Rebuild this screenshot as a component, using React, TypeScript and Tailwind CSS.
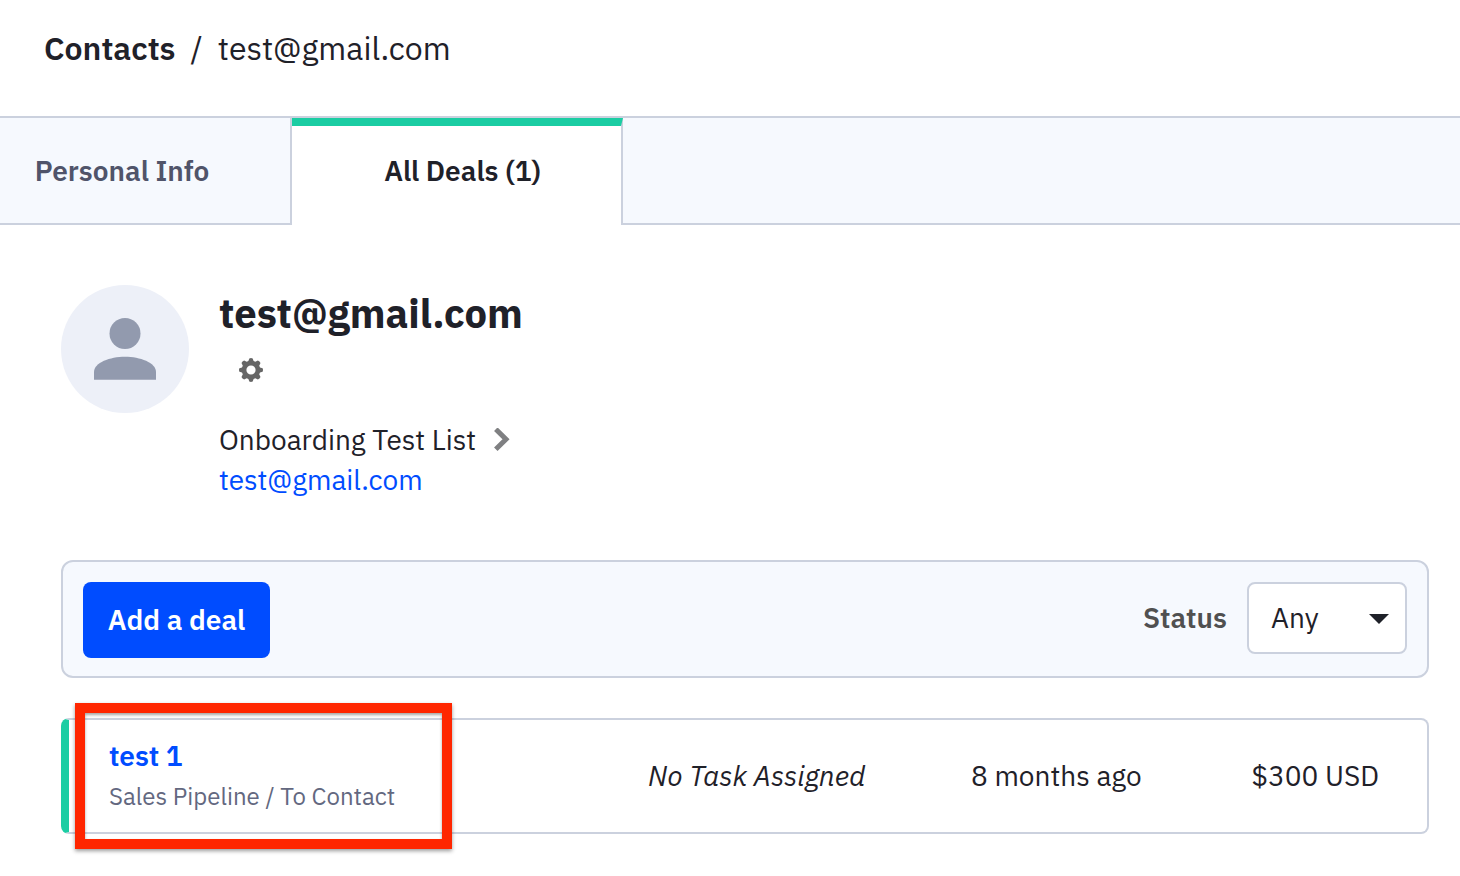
import { useState } from 'react';

const TABS = ['Personal Info', 'All Deals (1)'];

const DEALS = [
  {
    name: 'test 1',
    stage: 'Sales Pipeline / To Contact',
    task: 'No Task Assigned',
    age: '8 months ago',
    value: '$300 USD',
    highlighted: true,
  },
];

export default function App() {
  const [activeTab, setActiveTab] = useState(TABS[1]);

  return (
    <div className="min-h-screen bg-white text-[#1f2129] font-['IBM_Plex_Sans',Roboto,sans-serif] text-[28px] leading-10">
      <header className="px-11 pt-7 pb-12">
        <nav aria-label="Breadcrumb" className="flex gap-[15px] text-[32px]">
          <a href="#contacts" className="font-semibold">Contacts</a>
          <span>/</span>
          <span>test@gmail.com</span>
        </nav>
      </header>

      {/* Tabs */}
      <div role="tablist" className="flex border-t-2 border-[#cbd1de]">
        {TABS.map(tab => (
          <Tab key={tab} label={tab} active={tab === activeTab} onClick={() => setActiveTab(tab)} />
        ))}
        <div className="flex-1 bg-[#f6f9fe] border-b-2 border-[#cbd1de]" />
      </div>

      <main className="pl-[61px] pr-[31px] pt-[60px] pb-10">
        <Profile />
        <DealToolbar />
        <ul className="mt-10 space-y-5">
          {DEALS.map(deal => (
            <DealRow key={deal.name} deal={deal} />
          ))}
        </ul>
      </main>
    </div>
  );
}

function Tab({ label, active, onClick }: { label: string; active: boolean; onClick: () => void }) {
  return (
    <button
      type="button"
      role="tab"
      aria-selected={active}
      onClick={onClick}
      className={`h-[107px] border-r-2 border-r-[#cbd1de] font-semibold ${
        active
          ? 'w-[331px] pl-3 pb-2.5 bg-white border-t-8 border-t-[#1bcda3]'
          : 'w-[292px] pr-[46px] bg-[#f6f9fe] border-b-2 border-b-[#cbd1de] text-[#50546a]'
      }`}
    >
      {label}
    </button>
  );
}

function Profile() {
  return (
    <section className="flex items-start gap-[30px]">
      <svg className="w-32 h-32 shrink-0" viewBox="0 0 128 128">
        <circle cx="64" cy="64" r="64" fill="#edf0f8" />
        <g fill="#929aae">
          <circle cx="64" cy="48.5" r="15.5" />
          <path d="M33 94.7V87C33 77.5 49 71.7 64 71.7S95 77.5 95 87V94.7Z" />
        </g>
      </svg>
      <div>
        <h1 className="pt-1 text-[40px] leading-12 font-bold">test@gmail.com</h1>
        <button type="button" aria-label="Contact settings" className="block mt-[21px] ml-5">
          <GearIcon />
        </button>
        <div className="mt-[38px] flex items-center gap-[18px]">
          <span>Onboarding Test List</span>
          <svg className="w-4 h-6" viewBox="0 0 16 24" fill="none" stroke="#7f8082" strokeWidth="5">
            <path d="M1.8 1.2L12 11.2L1.8 21.2" />
          </svg>
        </div>
        <a href="mailto:test@gmail.com" className="block text-[#004cff]">test@gmail.com</a>
      </div>
    </section>
  );
}

function GearIcon() {
  return (
    <svg className="w-6 h-6" viewBox="0 0 24 24" fill="#666">
      <path
        fillRule="evenodd"
        d="M10.3 0.4Q12 -0.4 13.7 0.4L14.6 3L16.3 3.8L18.9 2.5Q20.8 3.2 21.5 5.1L20.2 7.7L21 9.4L23.6 10.3Q24.4 12 23.6 13.7L21 14.6L20.2 16.3L21.5 18.9Q20.8 20.8 18.9 21.5L16.3 20.2L14.6 21L13.7 23.6Q12 24.4 10.3 23.6L9.4 21L7.7 20.2L5.1 21.5Q3.2 20.8 2.5 18.9L3.8 16.3L3 14.6L0.4 13.7Q-0.4 12 0.4 10.3L3 9.4L3.8 7.7L2.5 5.1Q3.2 3.2 5.1 2.5L7.7 3.8L9.4 3ZM12 7.4A4.6 4.6 0 1 0 12 16.6A4.6 4.6 0 1 0 12 7.4Z"
      />
    </svg>
  );
}

function DealToolbar() {
  const [status, setStatus] = useState('Any');

  return (
    <section className="mt-[60px] flex items-start justify-between rounded-xl border-2 border-[#cbd1de] bg-[#f6f9fe] px-5 pt-5 pb-[18px]">
      <button type="button" className="h-[76px] w-[187px] rounded-lg bg-[#004cff] text-white font-semibold">
        Add a deal
      </button>
      <div className="flex items-center gap-5">
        <label htmlFor="status" className="font-semibold text-[#505050]">Status</label>
        <div className="relative">
          <select
            id="status"
            value={status}
            onChange={e => setStatus(e.target.value)}
            className="block h-[72px] w-40 appearance-none rounded-lg border-2 border-[#cbd1de] bg-white pl-[22px]"
          >
            <option>Any</option>
            <option>Open</option>
            <option>Won</option>
            <option>Lost</option>
          </select>
          <svg className="pointer-events-none absolute right-[18px] top-8 w-5 h-2.5" viewBox="0 0 20 10">
            <path d="M0 0H20L10 10Z" fill="#1f2129" />
          </svg>
        </div>
      </div>
    </section>
  );
}

function DealRow({ deal }: { deal: (typeof DEALS)[number] }) {
  return (
    <li className="flex items-center rounded-lg border-2 border-l-8 border-[#cbd1de] border-l-[#1bcda3] pl-10 pr-12">
      <div className="flex-1">
        <div className="relative w-[286px] py-4">
          <a href="#deal" className="block font-semibold text-[#004cff]">{deal.name}</a>
          <p className="whitespace-nowrap text-2xl leading-10 text-[#636880]">{deal.stage}</p>
          {deal.highlighted && (
            <div className="pointer-events-none absolute -left-[34px] -right-[57px] -top-[17px] -bottom-[17px] border-10 border-[#ff2600] shadow-[0_2px_4px_rgba(0,0,0,0.4),inset_0_2px_3px_rgba(0,0,0,0.35)]" />
          )}
        </div>
      </div>
      <span className="w-[323px] italic">{deal.task}</span>
      <span className="w-[230px]">{deal.age}</span>
      <span className="w-[178px] text-right">{deal.value}</span>
    </li>
  );
}
